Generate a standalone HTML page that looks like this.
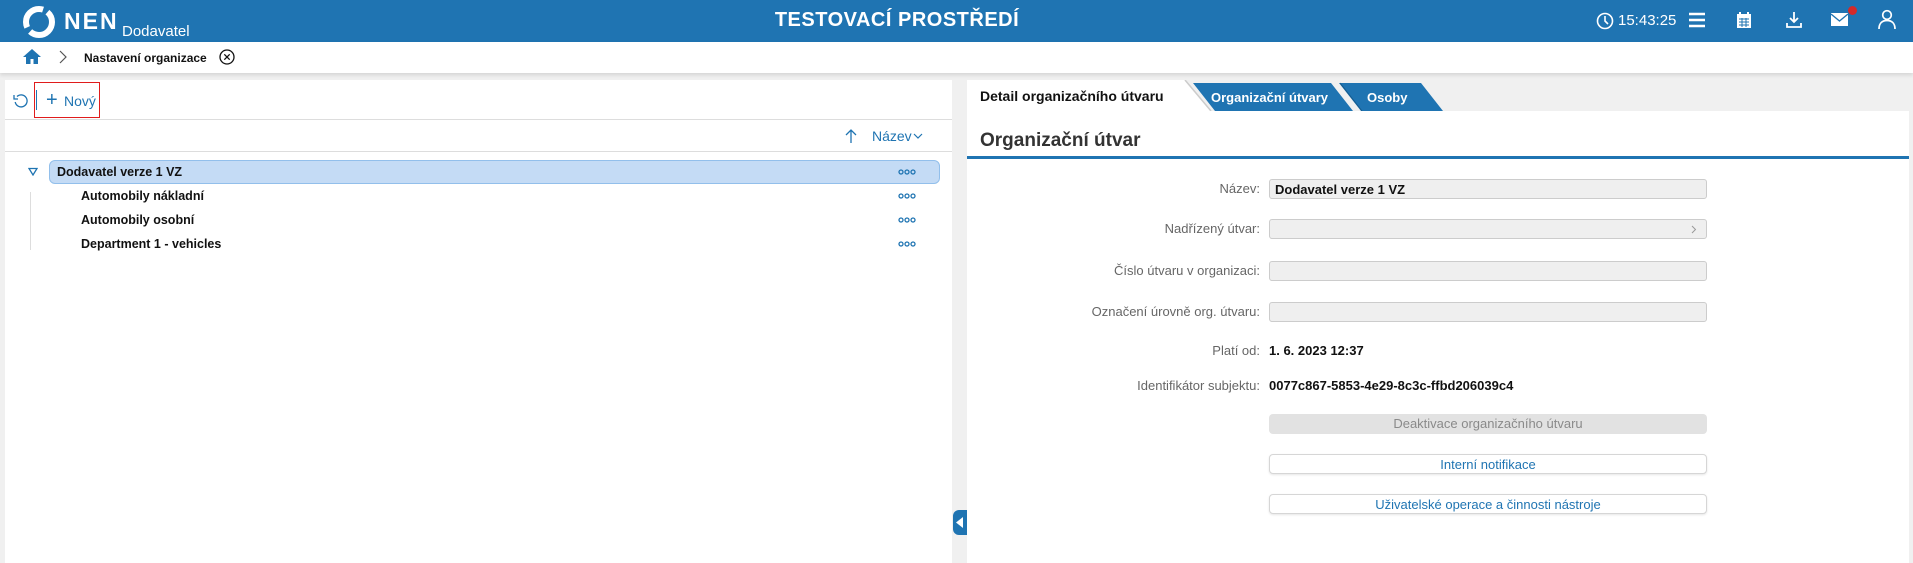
<!DOCTYPE html>
<html><head><meta charset="utf-8"><style>
*{box-sizing:border-box;margin:0;padding:0}
body{width:1913px;height:563px;overflow:hidden;background:#f0f0f0;font-family:"Liberation Sans",sans-serif;position:relative;font-size:13px;color:#111}
.a{position:absolute}
.hdr{left:0;top:0;width:1913px;height:42px;background:#1f74b2}
.bc{left:0;top:42px;width:1913px;height:31px;background:#fff;box-shadow:0 2px 4px rgba(0,0,0,.12)}
.lp{left:5px;top:80px;width:947px;height:483px;background:#fff}
.rp{left:967px;top:111px;width:942px;height:452px;background:#fff}
.b{font-weight:bold}
.lbl{right:653px;color:#666;font-size:13px;text-align:right;white-space:nowrap}
.fld{left:1269px;width:438px;height:20px;background:#efefef;border:1px solid #ccc;border-radius:3px}
.btn{left:1269px;width:438px;height:20px;border-radius:4px;text-align:center;line-height:20px;font-size:13px}
.ooo{left:898px;width:18px;height:6px}
.tr{font-size:12.5px}
</style></head><body>
<div class="a hdr"></div>
<svg class="a" style="left:22px;top:5px" width="34" height="34" viewBox="0 0 34 34"><circle cx="17" cy="17" r="13" fill="none" stroke="#fff" stroke-width="6" stroke-dasharray="30 5"/></svg>
<div class="a b" style="left:64px;top:8px;color:#fff;font-size:23px;letter-spacing:2px">NEN</div>
<div class="a" style="left:122px;top:23px;color:#fff;font-size:15px">Dodavatel</div>
<div class="a b" style="left:0;width:1794px;top:9px;text-align:center;color:#fff;font-size:20px;letter-spacing:.5px">TESTOVACÍ PROSTŘEDÍ</div>
<svg class="a" style="left:1596px;top:12px" width="18" height="18"><circle cx="9" cy="9" r="7.5" fill="none" stroke="#fff" stroke-width="1.6"/><path d="M9 4v5l3 3" stroke="#fff" stroke-width="1.6" fill="none"/></svg>
<div class="a" style="left:1618px;top:12px;color:#fff;font-size:15px">15:43:25</div>
<svg class="a" style="left:1688px;top:12px" width="18" height="16"><path d="M1 2h16M1 8h16M1 14h16" stroke="#fff" stroke-width="2.4"/></svg>
<svg class="a" style="left:1736px;top:11px" width="16" height="18"><rect x="1" y="3" width="14" height="14" fill="#fff"/><path d="M4 1v4M12 1v4" stroke="#fff" stroke-width="2"/><path d="M3 8h10M3 11h10M3 14h10M6 7v9M10 7v9" stroke="#1f74b2" stroke-width="1"/></svg>
<svg class="a" style="left:1785px;top:11px" width="18" height="18"><path d="M9 1v10M5 7l4 4 4-4M2 12v4h14v-4" stroke="#fff" stroke-width="1.8" fill="none"/></svg>
<svg class="a" style="left:1831px;top:12px" width="17" height="14"><rect x="0" y="1" width="17" height="13" fill="#fff"/><path d="M0 2l8.5 7L17 2" stroke="#1f74b2" stroke-width="1.3" fill="none"/></svg>
<div class="a" style="left:1848px;top:6px;width:9px;height:9px;border-radius:50%;background:#d42a2a"></div>
<svg class="a" style="left:1878px;top:9px" width="18" height="21"><circle cx="9" cy="6" r="4.3" fill="none" stroke="#fff" stroke-width="1.7"/><path d="M1 20c0-6 3.5-8.5 8-8.5s8 2.5 8 8.5" fill="none" stroke="#fff" stroke-width="1.7"/></svg>

<div class="a bc"></div>
<svg class="a" style="left:22px;top:48px" width="20" height="17"><path d="M10 1L1 9h3v7h4.5v-5h3v5H16V9h3z" fill="#1f74b2"/></svg>
<svg class="a" style="left:58px;top:50px" width="10" height="14"><path d="M2 1l6 6-6 6" stroke="#555" stroke-width="1.2" fill="none"/></svg>
<div class="a b" style="left:84px;top:51px;font-size:12px">Nastavení organizace</div>
<svg class="a" style="left:219px;top:49px" width="16" height="16"><circle cx="8" cy="8" r="7" fill="none" stroke="#111" stroke-width="1.3"/><path d="M5.3 5.3l5.4 5.4M10.7 5.3l-5.4 5.4" stroke="#111" stroke-width="1.3"/></svg>

<div class="a lp"></div>
<svg class="a" style="left:13px;top:93px" width="16" height="16"><path d="M4 3.5A6 6 0 1 1 2.2 9" fill="none" stroke="#1f74b2" stroke-width="1.3"/><path d="M1 2v4h4" fill="none" stroke="#1f74b2" stroke-width="1.3"/></svg>
<div class="a" style="left:36px;top:90px;width:1px;height:20px;background:#1f74b2"></div>
<div class="a" style="left:34px;top:82px;width:66px;height:36px;border:1px solid #e01c1c"></div>
<div class="a" style="left:46px;top:89px;color:#1f74b2;font-size:20px;font-weight:300">+</div>
<div class="a" style="left:64px;top:93px;color:#1f74b2;font-size:14px">Nový</div>
<div class="a" style="left:5px;top:119px;width:947px;height:1px;background:#ddd"></div>
<svg class="a" style="left:844px;top:128px" width="14" height="16"><path d="M7 15V2M2 7l5-5 5 5" stroke="#1f74b2" stroke-width="1.3" fill="none"/></svg>
<div class="a" style="left:872px;top:128px;color:#1f74b2;font-size:14px">Název</div>
<svg class="a" style="left:913px;top:133px" width="10" height="7"><path d="M1 1l4 4 4-4" stroke="#1f74b2" stroke-width="1.2" fill="none"/></svg>
<div class="a" style="left:5px;top:151px;width:947px;height:1px;background:#ddd"></div>
<svg class="a" style="left:28px;top:167px" width="10" height="9"><path d="M1 1.5h8L5 8z" fill="none" stroke="#1f74b2" stroke-width="1.3"/></svg>
<div class="a" style="left:49px;top:160px;width:891px;height:24px;background:#c4dbf5;border:1px solid #92bfeb;border-radius:6px"></div>
<div class="a b tr" style="left:57px;top:165px">Dodavatel verze 1 VZ</div>
<div class="a" style="left:30px;top:192px;width:1px;height:58px;background:#ddd"></div>
<div class="a b tr" style="left:81px;top:189px">Automobily nákladní</div>
<div class="a b tr" style="left:81px;top:213px">Automobily osobní</div>
<div class="a b tr" style="left:81px;top:237px">Department 1 - vehicles</div>
<svg class="a ooo" style="top:169px"><circle cx="3" cy="3" r="2" fill="none" stroke="#1f74b2" stroke-width="1.3"/><circle cx="9" cy="3" r="2" fill="none" stroke="#1f74b2" stroke-width="1.3"/><circle cx="15" cy="3" r="2" fill="none" stroke="#1f74b2" stroke-width="1.3"/></svg>
<svg class="a ooo" style="top:193px"><circle cx="3" cy="3" r="2" fill="none" stroke="#1f74b2" stroke-width="1.3"/><circle cx="9" cy="3" r="2" fill="none" stroke="#1f74b2" stroke-width="1.3"/><circle cx="15" cy="3" r="2" fill="none" stroke="#1f74b2" stroke-width="1.3"/></svg>
<svg class="a ooo" style="top:217px"><circle cx="3" cy="3" r="2" fill="none" stroke="#1f74b2" stroke-width="1.3"/><circle cx="9" cy="3" r="2" fill="none" stroke="#1f74b2" stroke-width="1.3"/><circle cx="15" cy="3" r="2" fill="none" stroke="#1f74b2" stroke-width="1.3"/></svg>
<svg class="a ooo" style="top:241px"><circle cx="3" cy="3" r="2" fill="none" stroke="#1f74b2" stroke-width="1.3"/><circle cx="9" cy="3" r="2" fill="none" stroke="#1f74b2" stroke-width="1.3"/><circle cx="15" cy="3" r="2" fill="none" stroke="#1f74b2" stroke-width="1.3"/></svg>
<div class="a" style="left:953px;top:510px;width:14px;height:25px;background:#1f74b2;border-radius:6px 0 0 6px"></div>
<svg class="a" style="left:956px;top:517px" width="8" height="11"><path d="M7 0v11L0 5.5z" fill="#fff"/></svg>

<svg class="a" style="left:967px;top:80px" width="490" height="32">
<path d="M372 3h82l22 28H394z" fill="#1f74b2"/>
<path d="M373 3l22 28" stroke="#155a8c" stroke-width="1"/>
<path d="M226 3h138l22 28H248z" fill="#1f74b2"/>
<path d="M0 0h218l26 31H0z" fill="#fff"/>
<path d="M218 0l26 31" stroke="#ccc" stroke-width="1.5"/>
</svg>
<div class="a b" style="left:980px;top:88px;font-size:14px">Detail organizačního útvaru</div>
<div class="a b" style="left:1211px;top:90px;font-size:13px;color:#fff">Organizační útvary</div>
<div class="a b" style="left:1367px;top:90px;font-size:13px;color:#fff">Osoby</div>
<div class="a rp"></div>
<div class="a" style="left:980px;top:130px;font-size:19px;font-weight:bold;color:#333">Organizační útvar</div>
<div class="a" style="left:967px;top:156px;width:942px;height:3px;background:#1f74b2"></div>

<div class="a lbl" style="top:181px">Název:</div>
<div class="a fld" style="top:179px"></div>
<div class="a b" style="left:1275px;top:182px">Dodavatel verze 1 VZ</div>
<div class="a lbl" style="top:221px">Nadřízený útvar:</div>
<div class="a fld" style="top:219px"></div>
<svg class="a" style="left:1691px;top:225px" width="6" height="9"><path d="M1 1l3.5 3.5L1 8" stroke="#999" fill="none"/></svg>
<div class="a lbl" style="top:263px">Číslo útvaru v organizaci:</div>
<div class="a fld" style="top:261px"></div>
<div class="a lbl" style="top:304px">Označení úrovně org. útvaru:</div>
<div class="a fld" style="top:302px"></div>
<div class="a lbl" style="top:343px">Platí od:</div>
<div class="a b" style="left:1269px;top:343px">1. 6. 2023 12:37</div>
<div class="a lbl" style="top:378px">Identifikátor subjektu:</div>
<div class="a b" style="left:1269px;top:378px">0077c867-5853-4e29-8c3c-ffbd206039c4</div>
<div class="a btn" style="top:414px;background:#e2e2e2;color:#8a8a8a">Deaktivace organizačního útvaru</div>
<div class="a btn" style="top:454px;background:#fff;border:1px solid #d6d6d6;color:#1f74b2;box-shadow:0 1px 2px rgba(0,0,0,.1)">Interní notifikace</div>
<div class="a btn" style="top:494px;background:#fff;border:1px solid #d6d6d6;color:#1f74b2;box-shadow:0 1px 2px rgba(0,0,0,.1)">Uživatelské operace a činnosti nástroje</div>
</body></html>
